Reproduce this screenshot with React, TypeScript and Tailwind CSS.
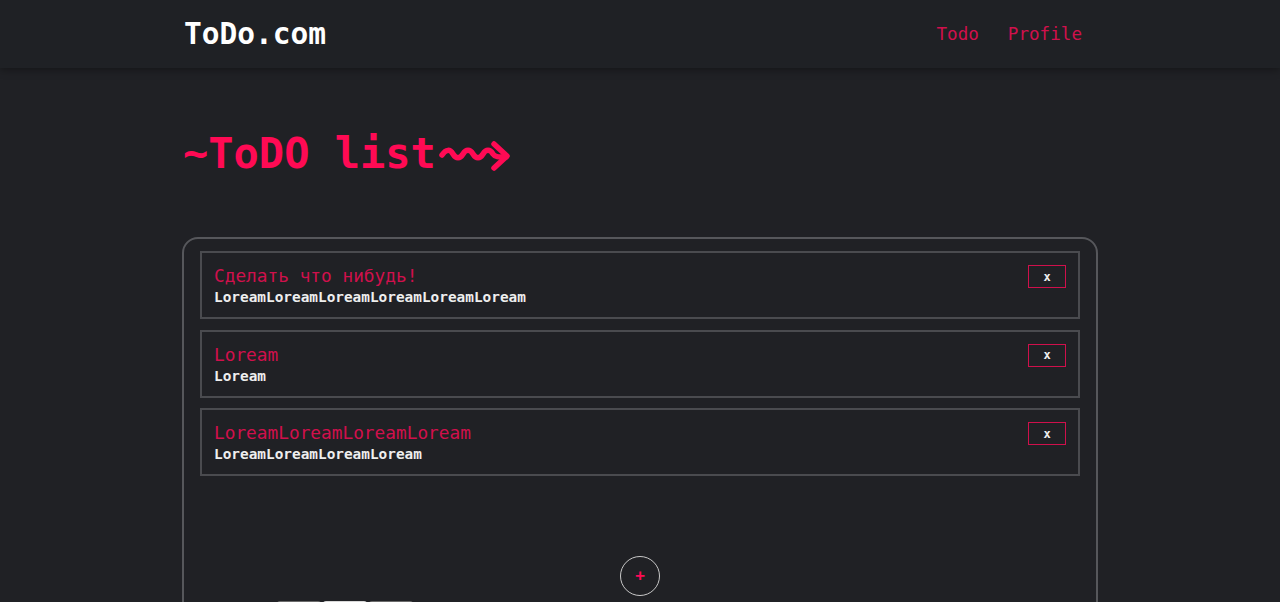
import React from "react";

const tasks = [
  { title: "Сделать что нибудь!", desc: "LoreamLoreamLoreamLoreamLoreamLoream" },
  { title: "Loream", desc: "Loream" },
  { title: "LoreamLoreamLoreamLoream", desc: "LoreamLoreamLoreamLoream" },
];

function SquiggleArrow() {
  return (
    <svg
      width="74"
      height="36"
      viewBox="0 0 74 36"
      fill="none"
      stroke="#ff0a54"
      strokeWidth="5.5"
      strokeLinecap="round"
      strokeLinejoin="round"
      className="block"
    >
      <path d="M4 18 C8 12 12 12 15 17 C18 22 22 22 25 17 C28 12 32 12 35 17 C38 22 42 22 45 17 C48 12 52 12 55 17 C57 20 60 20 68 20" />
      <path d="M56 7 L69 19 L56 31" />
    </svg>
  );
}

export default function App() {
  return (
    <div
      className="min-h-screen bg-[#202125] text-white"
      style={{ fontFamily: '"DejaVu Sans Mono", monospace' }}
    >
      <header className="h-[68px] bg-[#1f2125] shadow-[0_2px_8px_rgba(0,0,0,0.35)]">
        <div className="mx-auto flex h-full w-[912px] items-center justify-between">
          <div className="text-[29.5px] font-bold text-white">ToDo.com</div>
          <nav className="mr-[14px] flex gap-[29px] text-[17.6px] text-[#d0104c]">
            <span>Todo</span>
            <span>Profile</span>
          </nav>
        </div>
      </header>
      <main className="mx-auto w-[916px] pt-[56px]">
        <h1 className="flex items-center pl-[1px] text-[42px] font-bold leading-[60px] text-[#ff0a54]">
          <span>~ToDO list</span>
          <span className="ml-[2px] mt-[1px]">
            <SquiggleArrow />
          </span>
        </h1>
        <div className="mt-[53px] flex h-[400px] flex-col rounded-[16px] border-2 border-[#56575b] px-[16px] pt-[12px]">
          <div className="flex flex-col gap-[10.5px]">
            {tasks.map((t, i) => (
              <div
                key={i}
                className="flex h-[68px] items-start justify-between border-2 border-[#4a4b4f] pl-[12px] pr-[12px] pt-[12px]"
              >
                <div>
                  <div className="text-[17.8px] leading-[22px] text-[#d0104c]">{t.title}</div>
                  <div className="text-[14.4px] font-bold leading-[20px] text-[#eeeeee]">{t.desc}</div>
                </div>
                <button className="flex h-[23px] w-[38px] items-center justify-center border border-[#d0104c] text-[12px] font-bold text-[#eeeeee]">
                  x
                </button>
              </div>
            ))}
          </div>
          <div className="mt-[80px] flex justify-center">
            <button className="flex h-[40px] w-[40px] items-center justify-center rounded-full border border-[#c8c8c8] text-[16px] font-bold text-[#ff0a54]">
              +
            </button>
          </div>
          <div className="mt-[5px] flex gap-[2px] pl-[77px]">
            <div className="h-[20px] w-[44px] rounded-t-[3px] bg-[#6b6b6b]" />
            <div className="h-[20px] w-[44px] rounded-t-[3px] bg-[#d8d8d8]" />
            <div className="h-[20px] w-[44px] rounded-t-[3px] bg-[#6b6b6b]" />
          </div>
        </div>
      </main>
    </div>
  );
}
